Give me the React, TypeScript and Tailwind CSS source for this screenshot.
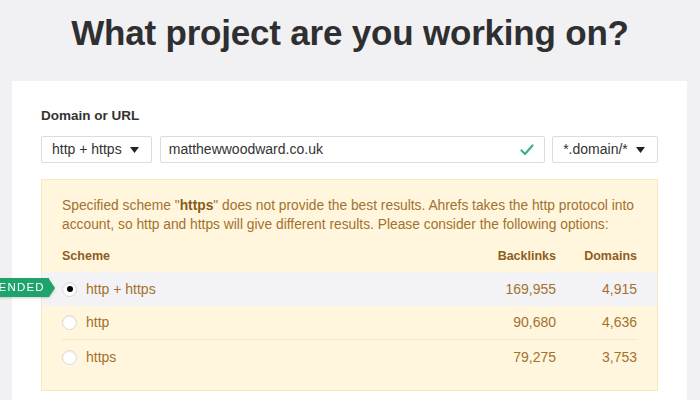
import React from "react";

const Tri = () => (
  <svg width="9" height="6" viewBox="0 0 9 6" className="shrink-0">
    <path d="M0 0 L9 0 L4.5 6 Z" fill="#222" />
  </svg>
);

const Radio = ({ checked }: { checked?: boolean }) => (
  <span className="w-[15px] h-[15px] rounded-full bg-white border border-[#d9d9d9] shadow-[inset_0_1px_1px_rgba(0,0,0,0.08)] flex items-center justify-center shrink-0">
    {checked && <span className="w-[6px] h-[6px] rounded-full bg-black" />}
  </span>
);

const rows = [
  { s: "http + https", b: "169,955", d: "4,915", sel: true },
  { s: "http", b: "90,680", d: "4,636" },
  { s: "https", b: "79,275", d: "3,753" },
];

export default function App() {
  return (
    <div
      className="w-[700px] h-[400px] overflow-hidden bg-[#f1f1f3] relative"
      style={{ fontFamily: '"Liberation Sans", Arial, sans-serif' }}
    >
      <h1 className="text-center font-bold text-[35px] leading-[40px] text-[#2f2f31] pt-[13px] tracking-[-0.2px]">
        What project are you working on?
      </h1>
      <div className="mt-[28px] ml-[12px] mr-[13px] bg-white h-[400px] pt-[27px] px-[29px]">
        <div className="text-[13.5px] font-bold text-[#333] leading-[16px]">Domain or URL</div>
        <div className="flex mt-[12px] h-[27px]">
          <div className="w-[111px] border border-[#dcdcdc] rounded-[2px] flex items-center pl-[10px] pr-[12px] justify-between text-[14px] text-[#333]">
            <span>http + https</span>
            <Tri />
          </div>
          <div className="ml-[8px] w-[386px] border border-[#dcdcdc] rounded-[2px] flex items-center pl-[8px] pr-[10px] justify-between text-[14px] text-[#333]">
            <span>matthewwoodward.co.uk</span>
            <svg width="14" height="12" viewBox="0 0 14 12">
              <path d="M1.5 6.5 L5 10 L12.5 1.5" stroke="#3db37f" strokeWidth="2.2" fill="none" strokeLinecap="round" strokeLinejoin="round" />
            </svg>
          </div>
          <div className="ml-[7px] w-[106px] border border-[#dcdcdc] rounded-[2px] flex items-center pl-[10px] pr-[12px] justify-between text-[14px] text-[#333]">
            <span>*.domain/*</span>
            <Tri />
          </div>
        </div>
        <div className="mt-[16px] bg-[#fff6dd] border border-[#f7e8c4] pt-[16px] pb-[16px] text-[#a3712f]">
          <p className="px-[20px] text-[13.8px] leading-[19px]">
            Specified scheme "<b className="text-[#8a5a18]">https</b>" does not provide the best results. Ahrefs takes the http protocol into account, so http and https will give different results. Please consider the following options:
          </p>
          <div className="mt-[7px]">
            <div className="flex items-center h-[31px] px-[20px] text-[12.5px] font-bold text-[#8e5e1e]">
              <span className="flex-1">Scheme</span>
              <span className="w-[100px] text-right">Backlinks</span>
              <span className="w-[81px] text-right">Domains</span>
            </div>
            {rows.map((r, i) => (
              <div key={r.s} className={r.sel ? "bg-[#f3f3f5]" : ""}>
                <div
                  className={
                    "flex items-center h-[34px] mx-[20px] text-[14px] " +
                    (i === 1 ? "border-b border-[#f3e6c8]" : "")
                  }
                >
                  <Radio checked={r.sel} />
                  <span className="flex-1 ml-[9px]">{r.s}</span>
                  <span className="w-[100px] text-right">{r.b}</span>
                  <span className="w-[81px] text-right">{r.d}</span>
                </div>
              </div>
            ))}
          </div>
        </div>
      </div>
      <div className="absolute left-[-67px] top-[278px] h-[19px] flex items-center drop-shadow-[0_1px_1px_rgba(0,0,0,0.2)]">
        <div className="h-[19px] bg-[#1fa36c] text-white text-[11.5px] tracking-[1.2px] leading-[19px] pl-[6px] pr-[4px]">
          RECOMMENDED
        </div>
        <div className="w-0 h-0 border-t-[9.5px] border-b-[9.5px] border-l-[6px] border-t-transparent border-b-transparent border-l-[#1fa36c]" />
      </div>
    </div>
  );
}
